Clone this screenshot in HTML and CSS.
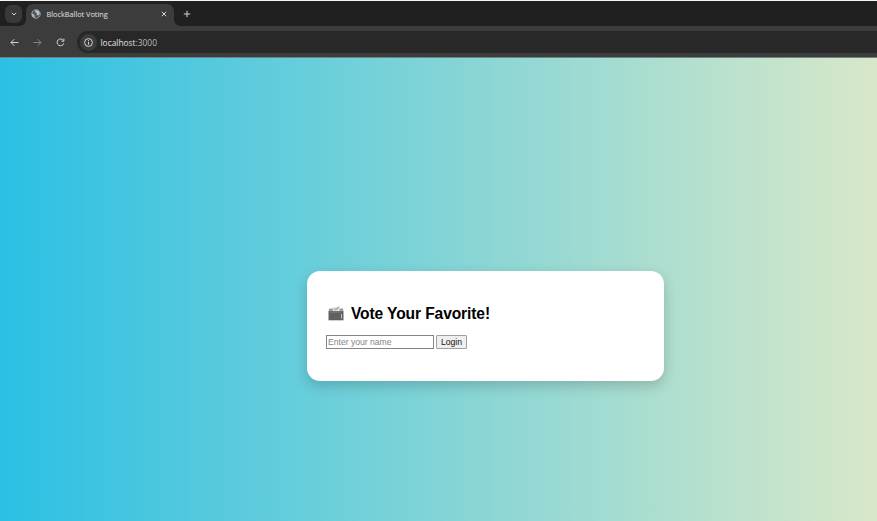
FILE: index.html
```html
<!DOCTYPE html>
<html lang="en">
<head>
<meta charset="utf-8">
<title>BlockBallot Voting</title>
<link rel="stylesheet" href="styles.css">
</head>
<body>
<header class="browser">
  <div class="tabstrip">
    <span class="tab-search"><svg width="6" height="4" viewBox="0 0 6 4"><path d="M.8.8 3 3 5.200.8"/></svg></span>
    <div class="tab">
      <svg class="globe" width="10" height="10" viewBox="0 0 10 10"><circle cx="5" cy="5" r="4.300"/><path d="M1 4.200 3.500 6.200 3.700 8.700A4 4 0 0 1 1 4.200ZM4.500 1 4 3 6 4.200 5.500 5.800 7.300 6.500 8.800 4.800A4 4 0 0 0 4.500 1Z"/></svg>
      <span class="tab-title">BlockBallot Voting</span>
      <svg class="close" width="6" height="6" viewBox="0 0 6 6"><path d="m.8.8 4.400 4.400M5.200.8.8 5.200"/></svg>
    </div>
    <svg class="plus" width="8" height="8" viewBox="0 0 8 8"><path d="M4 .8v6.400M.8 4h6.400"/></svg>
  </div>
  <div class="toolbar">
    <svg width="9" height="9" viewBox="0 0 9 9"><path d="M8.500 4.500H1M4.300 1.200 1 4.500 4.300 7.800"/></svg>
    <svg class="disabled" width="9" height="9" viewBox="0 0 9 9"><path d="M.5 4.500H8M4.700 1.200 8 4.500 4.700 7.800"/></svg>
    <svg width="9" height="9" viewBox="0 0 9 9"><path d="M7.500 2.700A3.400 3.400 0 1 0 7.800 5.300M7.900.7v2.500H5.400"/></svg>
    <div class="omnibox">
      <span class="site-info"><svg width="9" height="9" viewBox="0 0 9 9"><circle cx="4.500" cy="4.500" r="3.900"/><path d="M4.500 4v2.600M4.500 2.200v1"/></svg></span>
      <span class="url">localhost<span class="port">:3000</span></span>
    </div>
  </div>
</header>
<main class="page">
  <section class="card">
    <h1 class="heading">
      <svg class="ballot" width="16" height="15" viewBox="0 0 16 15"><path class="box-top" d="M1.200 2.500h13.600l.7 3.500H.5Z"/><path class="paper" d="M4.500 1.200 11.300.5l.5 4.500H5Z"/><path class="check" d="m6.200 2.700 1.500 1.300L10.900.7"/><path class="box" d="M.5 5.300h15v9H.5Z"/><path class="slot" d="M2 6.500h11"/><path class="side" d="M13.500 8v4.500"/></svg>
      <span>Vote Your Favorite!</span>
    </h1>
    <form class="login">
      <input class="name" type="text" placeholder="Enter your name" aria-label="Name">
      <button class="submit" type="button">Login</button>
    </form>
  </section>
</main>
</body>
</html>
```
FILE: styles.css
```css
* { box-sizing: border-box; }
body {
  margin: 0;
  height: 521px;
  display: flex;
  flex-direction: column;
  overflow: hidden;
  font-family: "Liberation Sans", Arial, sans-serif;
}
svg { display: block; flex: none; }
.browser {
  height: 58px;
  flex: none;
  border-top: 1px solid #f4f6f6;
  border-bottom: 1px solid #6d8283;
  background: #3c3c3c;
  font-family: "Open Sans", "Noto Sans", sans-serif;
  color: #e3e3e3;
}
.browser path, .browser circle { fill: none; stroke: #d4d4d4; stroke-width: 1; }
.tabstrip {
  height: 25px;
  display: flex;
  align-items: center;
  padding-left: 5px;
  background: #202020;
}
.tab-search {
  width: 17px;
  height: 18px;
  display: grid;
  place-items: center;
  border-radius: 6px;
  background: #393939;
}
.tab {
  position: relative;
  align-self: flex-end;
  width: 148px;
  height: 22px;
  margin-left: 4px;
  padding: 0 7px 2px 5px;
  display: flex;
  align-items: center;
  border-radius: 7px 7px 0 0;
  background: #3c3c3c;
}
.tab::before, .tab::after {
  content: "";
  position: absolute;
  bottom: 0;
  width: 6px;
  height: 6px;
}
.tab::before { left: -6px; background: radial-gradient(circle at 0 0, transparent 5.5px, #3c3c3c 6px); }
.tab::after { right: -6px; background: radial-gradient(circle at 100% 0, transparent 5.5px, #3c3c3c 6px); }
.browser .globe circle { fill: #50585e; stroke: #a0a7ab; stroke-width: .8; }
.browser .globe path { fill: #b8bec1; stroke: none; }
.tab-title { margin-left: 5.5px; font-size: 7.3px; line-height: 10px; white-space: nowrap; }
.close { margin-left: auto; }
.plus { margin-left: 9px; }
.toolbar {
  height: 32px;
  display: flex;
  align-items: center;
  gap: 14px;
  padding-left: 10px;
}
.browser .disabled path { stroke: #858585; }
.omnibox {
  flex: 1;
  height: 22px;
  margin-left: -2px;
  display: flex;
  align-items: center;
  padding-left: 3px;
  border-radius: 12px 0 0 12px;
  background: #282828;
}
.site-info {
  width: 17px;
  height: 17px;
  display: grid;
  place-items: center;
  border-radius: 50%;
  background: #3c3c3c;
}
.url { margin-left: 3.5px; padding-top: 1px; font-size: 8.4px; line-height: 12px; }
.port { color: #b9b9b9; }
.page {
  flex: 1;
  padding: 212.5px 0 0 307px;
  background: linear-gradient(to right, #2bc0e4 0, #eaecc6 970px);
}
.card {
  width: 357px;
  height: 110.5px;
  padding: 33px 19px 0;
  border-radius: 13px;
  background: #fff;
  box-shadow: 0 5px 13px rgba(0, 0, 0, .18);
}
.heading {
  margin: 0;
  height: 20px;
  display: flex;
  align-items: center;
  gap: 7px;
  padding-left: 2px;
  font-size: 15.6px;
  letter-spacing: -.12px;
  line-height: 20px;
  color: #000;
}
.box { fill: #606060; }
.box-top { fill: #9a9a9a; }
.paper { fill: #e4e4df; }
.check { fill: none; stroke: #777; stroke-width: 1; }
.slot { stroke: #777; stroke-width: .8; }
.side { stroke: #c5c5c5; stroke-width: 1; }
.login { display: flex; gap: 2px; margin-top: 11.5px; }
.name {
  width: 108px;
  height: 14px;
  padding: 0 1px 1px;
  border: 1px solid #858585;
  border-radius: 0;
  background: #fff;
  font: 8.6px "Liberation Sans", Arial, sans-serif;
}
.name::placeholder { color: #858585; opacity: 1; }
.submit {
  width: 31px;
  height: 14px;
  padding: 0;
  border: 1px solid #a0a0a0;
  border-radius: 1px;
  background: #efefef;
  color: #111;
  font: 8.6px/11px "Liberation Sans", Arial, sans-serif;
}
```
